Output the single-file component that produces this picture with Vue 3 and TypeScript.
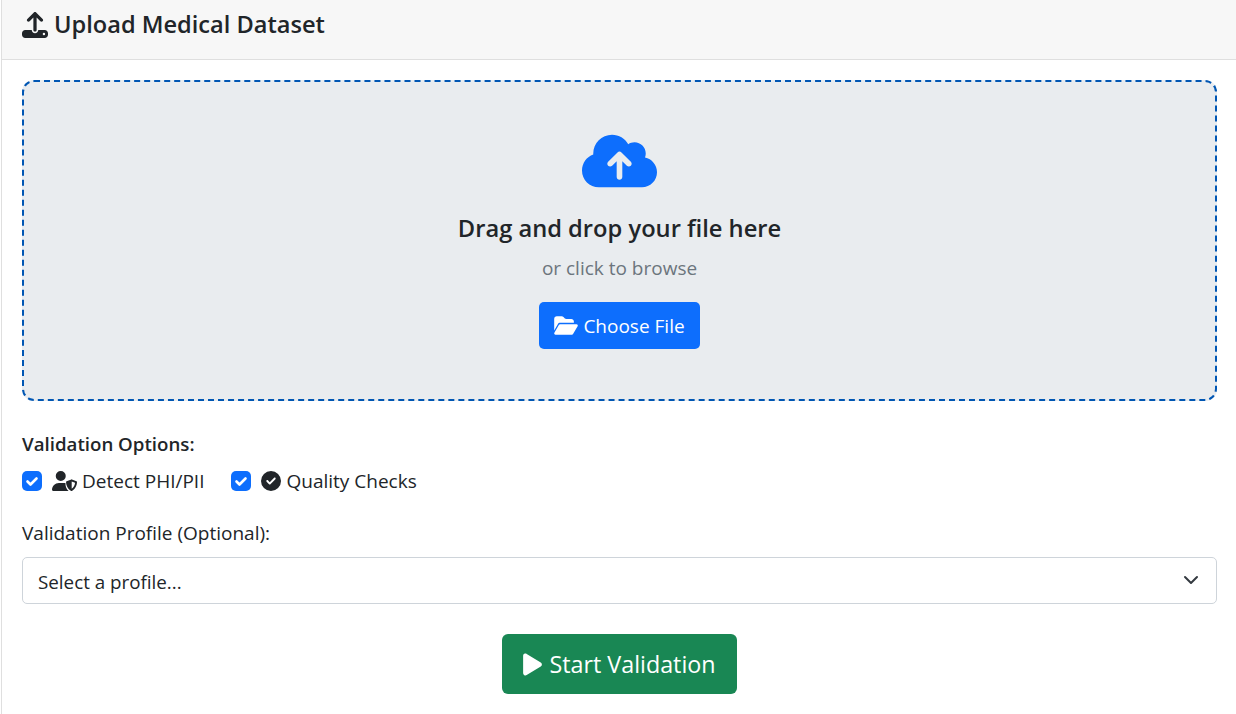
<template>
  <div class="card">
    <div class="card-header">
      <svg class="icon" viewBox="0 0 512 512"><path :d="icons.upload" /></svg>
      <h4>Upload Medical Dataset</h4>
    </div>
    <div class="card-body">
      <div class="drop-zone">
        <svg class="cloud" viewBox="0 0 640 512"><path :d="icons.cloud" /></svg>
        <h5>Drag and drop your file here</h5>
        <p class="muted">or click to browse</p>
        <button class="btn btn-primary" type="button">
          <svg class="icon-sm" viewBox="0 0 576 512"><path :d="icons.folder" /></svg>
          Choose File
        </button>
      </div>

      <div class="options">
        <div class="options-title">Validation Options:</div>
        <div class="options-row">
          <label v-for="opt in options" :key="opt.label" class="check">
            <input type="checkbox" checked>
            <span class="box">
              <svg viewBox="0 0 20 20"><path d="M5.5 10.5l3 3 6-6" /></svg>
            </span>
            <svg class="opt-icon" :viewBox="opt.viewBox"><path :d="opt.icon" /></svg>
            <span>{{ opt.label }}</span>
          </label>
        </div>
      </div>

      <div class="profile">
        <label class="profile-label" for="profile">Validation Profile (Optional):</label>
        <div class="select-wrap">
          <select id="profile">
            <option>Select a profile...</option>
          </select>
          <svg class="chevron" viewBox="0 0 16 16"><path d="M2 5l6 6 6-6" /></svg>
        </div>
      </div>

      <div class="actions">
        <button class="btn btn-success" type="button">
          <svg class="icon-play" viewBox="0 0 384 512"><path :d="icons.play" /></svg>
          Start Validation
        </button>
      </div>
    </div>
  </div>
</template>

<script setup lang="ts">
const icons = {
  upload: 'M288 109.3V352c0 17.7-14.3 32-32 32s-32-14.3-32-32V109.3l-73.4 73.4c-12.5 12.5-32.8 12.5-45.3 0s-12.5-32.8 0-45.3l128-128c12.5-12.5 32.8-12.5 45.3 0l128 128c12.5 12.5 12.5 32.8 0 45.3s-32.8 12.5-45.3 0L288 109.3zM64 352H192c0 35.3 28.7 64 64 64s64-28.7 64-64H448c35.3 0 64 28.7 64 64v32c0 35.3-28.7 64-64 64H64c-35.3 0-64-28.7-64-64V416c0-35.3 28.7-64 64-64zM432 456a24 24 0 1 0 0-48 24 24 0 1 0 0 48z',
  cloud: 'M144 480C64.5 480 0 415.5 0 336c0-62.8 40.2-116.2 96.2-135.9c-.1-2.7-.2-5.4-.2-8.1c0-88.4 71.6-160 160-160c59.3 0 111 32.2 138.7 80.2C409.9 102 428.3 96 448 96c53 0 96 43 96 96c0 12.2-2.3 23.8-6.4 34.6C596 238.4 640 290.1 640 352c0 70.7-57.3 128-128 128H144zm79-217c-9.4 9.4-9.4 24.6 0 33.9s24.6 9.4 33.9 0l39-39V392c0 13.3 10.7 24 24 24s24-10.7 24-24V257.9l39 39c9.4 9.4 24.6 9.4 33.9 0s9.4-24.6 0-33.9l-80-80c-9.4-9.4-24.6-9.4-33.9 0l-80 80z',
  folder: 'M88.7 223.8L0 375.8V96C0 60.7 28.7 32 64 32H181.5c17 0 33.3 6.7 45.3 18.7l26.5 26.5c12 12 28.3 18.7 45.3 18.7H416c35.3 0 64 28.7 64 64v32H144c-22.8 0-43.8 12.1-55.3 31.8zm27.6 16.1C122.1 230 132.6 224 144 224H544c11.5 0 22 6.1 27.7 16.1s5.7 22.2-.1 32.1l-112 192C453.9 474 443.4 480 432 480H32c-11.5 0-22-6.1-27.7-16.1s-5.7-22.2 .1-32.1l112-192z',
  play: 'M73 39c-14.8-9.1-33.4-9.4-48.5-.9S0 62.6 0 80V432c0 17.4 9.4 33.4 24.5 41.9s33.7 8.1 48.5-.9L361 297c14.3-8.7 23-24.2 23-41s-8.7-32.2-23-41L73 39z',
  userShield: 'M224 256A128 128 0 1 0 224 0a128 128 0 1 0 0 256zm-45.7 48C79.8 304 0 383.8 0 482.3C0 498.7 13.3 512 29.7 512H424c-50-40-80-110-80-190c0-6 .5-12 1.5-18H178.3zM496 215c4-2 10-2 14 0l116 46c9 4 14 12 14 22c0 65-27 172-130 226c-6 3-14 3-20 0C387 455 360 348 360 283c0-10 5-18 14-22zM504 268v184c55-30 84-100 86-150z',
  circleCheck: 'M256 512A256 256 0 1 0 256 0a256 256 0 1 0 0 512zM369 209L241 337c-9.4 9.4-24.6 9.4-33.9 0l-64-64c-9.4-9.4-9.4-24.6 0-33.9s24.6-9.4 33.9 0l47 47L335 175c9.4-9.4 24.6-9.4 33.9 0s9.4 24.6 0 33.9z',
}

const options = [
  { label: 'Detect PHI/PII', icon: icons.userShield, viewBox: '0 0 640 512' },
  { label: 'Quality Checks', icon: icons.circleCheck, viewBox: '0 0 512 512' },
]
</script>

<style>
html,
body {
  overflow: hidden;
  background: #fff;
}
</style>

<style scoped>
.card {
  width: 1236px;
  height: 714px;
  margin-left: 1px;
  box-sizing: border-box;
  border-left: 1px solid #dfdfdf;
  font-family: "Open Sans", "Noto Sans", sans-serif;
  font-size: 19px;
  color: #212529;
  overflow: hidden;
}

.card-header {
  height: 59px;
  display: flex;
  align-items: center;
  gap: 6px;
  padding: 0 20px;
  background: #f7f7f7;
  border-bottom: 1px solid #dfdfdf;
}

.card-header h4 {
  margin: 0;
  font-size: 23.6px;
  font-weight: 600;
  line-height: 1;
  position: relative;
  top: -5px;
}

.icon {
  width: 26px;
  height: 26px;
  fill: #212529;
  position: relative;
  top: -5px;
}

.card-body {
  padding: 20px;
}

.drop-zone {
  height: 321px;
  box-sizing: border-box;
  display: flex;
  flex-direction: column;
  align-items: center;
  padding-top: 49px;
  background: #e9ecef;
  border: 2px dashed #0056b3;
  border-radius: 12px;
}

.cloud {
  width: 75px;
  height: 60px;
  fill: #0d6efd;
}

.drop-zone h5 {
  margin: 22px 0 0;
  font-size: 23.7px;
  font-weight: 600;
  line-height: 30px;
}

.muted {
  margin: 10px 0 0;
  color: #6c757d;
  line-height: 30px;
}

.btn {
  display: inline-flex;
  align-items: center;
  justify-content: center;
  border: 0;
  color: #fff;
  font-family: inherit;
  cursor: pointer;
}

.btn-primary {
  width: 161px;
  height: 47px;
  margin-top: 19px;
  gap: 5px;
  background: #0d6efd;
  border-radius: 5px;
  font-size: 19px;
}

.icon-sm {
  width: 24px;
  height: 21px;
  fill: #fff;
}

.options {
  margin-top: 30px;
}

.options-title {
  font-size: 18.7px;
  font-weight: 600;
  line-height: 25px;
}

.options-row {
  display: flex;
  gap: 27px;
  margin-top: 12px;
}

.check {
  display: flex;
  align-items: center;
  height: 25px;
}

.check input {
  position: absolute;
  opacity: 0;
  width: 0;
  height: 0;
}

.box {
  width: 20px;
  height: 20px;
  margin-right: 10px;
  background: #0d6efd;
  border-radius: 5px;
}

.box svg {
  display: block;
  fill: none;
  stroke: #fff;
  stroke-width: 2.6;
  stroke-linecap: round;
  stroke-linejoin: round;
}

.opt-icon {
  height: 20px;
  margin-right: 5px;
  fill: #212529;
}

.profile {
  margin-top: 25px;
}

.profile-label {
  display: block;
  line-height: 30px;
}

.select-wrap {
  position: relative;
  margin-top: 9px;
}

select {
  display: block;
  width: 100%;
  height: 47px;
  padding: 2px 15px 0;
  appearance: none;
  background: #fff;
  border: 1px solid #ced4da;
  border-radius: 5px;
  color: #212529;
  font-family: inherit;
  font-size: 18.8px;
}

.chevron {
  position: absolute;
  top: 15px;
  right: 18px;
  width: 16px;
  height: 16px;
  fill: none;
  stroke: #343a40;
  stroke-width: 2;
  stroke-linecap: round;
  stroke-linejoin: round;
  pointer-events: none;
}

.actions {
  display: flex;
  justify-content: center;
  margin-top: 30px;
}

.btn-success {
  width: 235px;
  height: 60px;
  gap: 7px;
  background: #198754;
  border-radius: 6px;
  font-size: 23.3px;
}

.icon-play {
  width: 19px;
  height: 25px;
  fill: #fff;
}
</style>
